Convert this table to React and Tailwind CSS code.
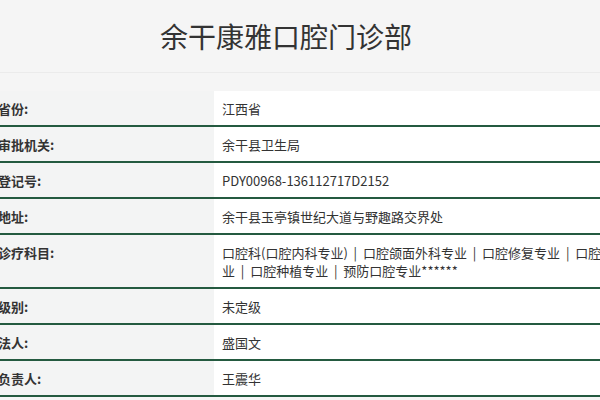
import React from 'react'

const sep = ' \u00a0|\u00a0 '

const rows = [
  { label: '省份:', value: '江西省' },
  { label: '审批机关:', value: '余干县卫生局' },
  { label: '登记号:', value: 'PDY00968-136112717D2152' },
  { label: '地址:', value: '余干县玉亭镇世纪大道与野趣路交界处' },
  {
    label: '诊疗科目:',
    value: ['口腔科(口腔内科专业)', '口腔颌面外科专业', '口腔修复专业', '口腔正畸专业', '口腔种植专业', '预防口腔专业******'].join(sep),
  },
  { label: '级别:', value: '未定级' },
  { label: '法人:', value: '盛国文' },
  { label: '负责人:', value: '王震华' },
]

const Row = ({ label, value }) => {
  return (
    <div className="flex border-b-2 border-[#245a40]">
      <div className="w-[216px] shrink-0 bg-[#f3f4f4] pt-[9px] pb-[7px] -ml-[2px] font-bold text-[#333]">{label}</div>
      <div className="flex-1 bg-white pt-[9px] pb-[7px] pl-2 pr-2 text-[#333]">{value}</div>
    </div>
  )
}

export default function App() {
  return (
    <div className="w-[600px] h-[400px] overflow-hidden bg-[#f5f5f5]" style={{ fontFamily: '"Microsoft YaHei", "Noto Sans CJK SC", "Open Sans", sans-serif' }}>
      <div className="h-[73px] border-b border-[#ebebeb] flex items-center justify-center pr-[28px]">
        <h1 className="text-[28px] text-[#333] font-normal leading-none">余干康雅口腔门诊部</h1>
      </div>
      <div className="mt-[18px] w-[654px] text-[13px] leading-[18px]">
        {rows.map((r, i) => (
          <Row key={i} label={r.label} value={r.value} />
        ))}
      </div>
    </div>
  )
}
